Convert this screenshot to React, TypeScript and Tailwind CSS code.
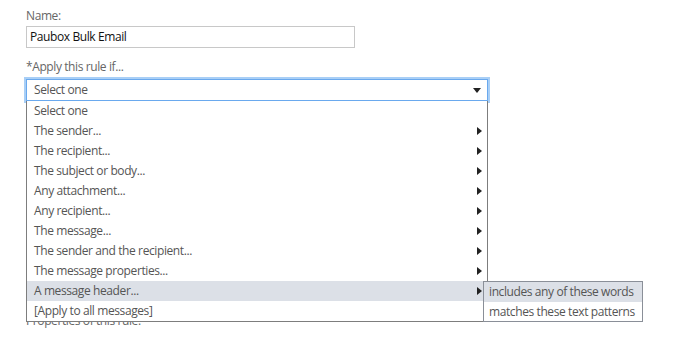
const OPTIONS = [
  { label: 'Select one', sub: false },
  { label: 'The sender...', sub: true },
  { label: 'The recipient...', sub: true },
  { label: 'The subject or body...', sub: true },
  { label: 'Any attachment...', sub: true },
  { label: 'Any recipient...', sub: true },
  { label: 'The message...', sub: true },
  { label: 'The sender and the recipient...', sub: true },
  { label: 'The message properties...', sub: true },
  { label: 'A message header...', sub: true, active: true },
  { label: '[Apply to all messages]', sub: false },
];

function ArrowRight() {
  return (
    <svg width="5" height="8" viewBox="0 0 5 8" className="shrink-0">
      <path d="M0 0 L5 4 L0 8 Z" fill="#222" />
    </svg>
  );
}

export default function App() {
  return (
    <div className="w-[674px] h-[340px] overflow-hidden bg-white pl-[26px] pt-[8px] text-[12px] leading-[16px] tracking-[-0.4px] whitespace-nowrap text-[#666]" style={{ fontFamily: '"Open Sans", sans-serif' }}>
      <div>Name:</div>
      <div className="mt-[2px] w-[329px] h-[22px] border border-[#c8c8c8] px-[3px] leading-[20px] text-[#111]">Paubox Bulk Email</div>

      <div className="mt-[11px]">*Apply this rule if...</div>
      <div className="relative mt-[4px] w-[462px]">
        {/* select box, focused */}
        <div className="h-[22px] border border-[#6aa9ee] shadow-[0_0_0_2px_#a9cff6] flex items-center justify-between pl-[7px] pr-[6px] text-[#555]">
          <span>Select one</span>
          <svg width="8" height="5" viewBox="0 0 8 5">
            <path d="M0 0 L8 0 L4 5 Z" fill="#222" />
          </svg>
        </div>

        {/* open list */}
        <div className="absolute left-0 top-full z-10 w-[462px] border border-t-0 border-[#7d7d7d] bg-white text-[#555]">
          {OPTIONS.map(o => (
            <div key={o.label} className={`h-[20px] flex items-center justify-between pl-[7px] pr-[5px] ${o.active ? 'bg-[#dce0e7]' : ''}`}>
              <span>{o.label}</span>
              {o.sub && <ArrowRight />}
            </div>
          ))}

          {/* submenu */}
          <div className="absolute left-[456px] top-[180px] w-[160px] border border-[#8a8f98] bg-white">
            <div className="h-[20px] flex items-center px-[5px] bg-[#dce0e7]">includes any of these words</div>
            <div className="h-[19px] flex items-center px-[5px]">matches these text patterns</div>
          </div>
        </div>
      </div>

      <div className="mt-[212px]">Properties of this rule:</div>
    </div>
  );
}
